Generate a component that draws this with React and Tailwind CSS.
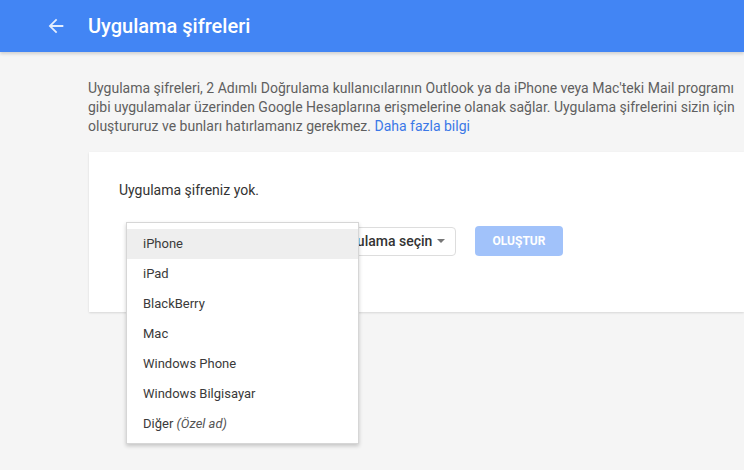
const devices = ["iPhone", "iPad", "BlackBerry", "Mac", "Windows Phone", "Windows Bilgisayar"]

const Caret = () => (
  <svg width="8" height="4" viewBox="0 0 8 4" className="ml-auto">
    <path d="M0 0h8L4 4z" fill="#777" />
  </svg>
)

export default function App() {
  return (
    <div className="relative min-h-[470px] bg-[#f5f5f5] font-['Roboto','Liberation_Sans',sans-serif]">
      <header className="flex h-[52px] items-center bg-[#4285f4] shadow-[0_2px_3px_rgba(0,0,0,0.15)]">
        <svg width="22" height="22" viewBox="0 0 24 24" className="ml-[45px]">
          <path d="M20 11H7.83l5.59-5.59L12 4l-8 8 8 8 1.41-1.41L7.83 13H20v-2z" fill="#fff" fillOpacity="0.85" />
        </svg>
        <h1 className="ml-[21px] text-[20px] font-medium text-white">Uygulama şifreleri</h1>
      </header>

      <p className="ml-[88px] mt-[27px] w-[652px] text-[14px] leading-[19px] text-[#5f5f5f]">
        <span>
          Uygulama şifreleri, 2 Adımlı Doğrulama kullanıcılarının Outlook ya da iPhone veya Mac'teki Mail programı gibi
          uygulamalar üzerinden Google Hesaplarına erişmelerine olanak sağlar. Uygulama şifrelerini sizin için
          oluştururuz ve bunları hatırlamanız gerekmez.
        </span>{" "}
        <a className="text-[#3b78e7]">Daha fazla bilgi</a>
      </p>

      <div className="ml-[89px] mt-[16px] h-[160px] bg-white pl-[30px] pt-[29px] shadow-[0_1px_2px_rgba(0,0,0,0.12)]">
        <p className="text-[14px] leading-[19px] text-[#333]">Uygulama şifreniz yok.</p>
        <div className="mt-[26px] flex items-center pl-[7px]">
          <div className="h-[29px] w-[186px] rounded-sm border border-[#ddd]" />
          <div className="ml-[10px] flex h-[29px] w-[134px] items-center rounded-sm border border-[#ddd] pl-[10px] pr-[10px] text-[14px] font-medium text-[#333]">
            Uygulama seçin
            <Caret />
          </div>
          <button className="ml-[19px] h-[30px] w-[88px] rounded-sm bg-[#a1c2fa] text-[12px] font-bold text-white">
            OLUŞTUR
          </button>
        </div>
      </div>

      <ul className="absolute left-[126px] top-[222px] w-[233px] border border-[#d6d6d6] bg-white pb-[4px] pt-[6px] text-[13px] text-[#3a3a3a] shadow-[0_2px_4px_rgba(0,0,0,0.2)]">
        {devices.map((d, i) => (
          <li key={d} className={`flex h-[30px] items-center pl-[16px] ${i === 0 ? "bg-[#eeeeee]" : ""}`}>
            {d}
          </li>
        ))}
        <li className="flex h-[30px] items-center pl-[16px]">
          Diğer&nbsp;<span className="italic text-[#555]">(Özel ad)</span>
        </li>
      </ul>
    </div>
  )
}
